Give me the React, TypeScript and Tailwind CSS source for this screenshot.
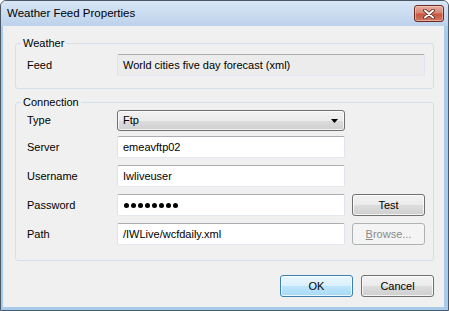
import type { ReactNode } from 'react'

const font = { fontFamily: '"Liberation Sans", Arial, sans-serif' }

const btnBase =
  'h-[22px] w-[73px] rounded-[3px] border text-[11px] flex items-center justify-center shadow-[inset_0_0_0_1px_rgba(255,255,255,0.75)]'
const btnNormal =
  'border-[#707070] text-black bg-[linear-gradient(#f2f2f2_0%,#ebebeb_50%,#dddddd_50%,#cfcfcf_100%)]'
const btnDefault =
  'border-[#3c7fb1] text-black bg-[linear-gradient(#eaf6fd_0%,#d9f0fc_50%,#bee6fd_50%,#a7d9f5_100%)]'
const btnDisabled = 'border-[#adb2b5] text-[#8a8a8a] bg-[#f4f4f4] shadow-none'

const textBox =
  'h-[22px] rounded-[2px] border border-[#e2e3ea] border-t-[#abadb3] border-b-[#e3e9ef] pl-[5px] flex items-center text-[11px] text-black'

function Row({ label, children, className = '' }: { label: string; children: ReactNode; className?: string }) {
  return (
    <div className={`flex items-center ${className}`}>
      <div className="w-[90px] text-[11px] text-black">{label}</div>
      {children}
    </div>
  )
}

function GroupBox({ title, children, className = '' }: { title: string; children: ReactNode; className?: string }) {
  return (
    <fieldset className={`border border-[#d5dfe5] rounded-[3px] pl-[11px] pr-[8px] ${className}`}>
      <legend className="-ml-[6px] px-[2px] text-[11px] leading-[14px] text-black">{title}</legend>
      {children}
    </fieldset>
  )
}

export default function App() {
  return (
    <div className="w-[449px] h-[311px] bg-white" style={font}>
      <div className="w-full h-full rounded-t-[6px] border border-[#4d5866] bg-[#a9cbea] flex flex-col overflow-hidden">
        {/* title bar */}
        <div className="h-[25px] shrink-0 flex items-start justify-between pl-[6px] pr-[4px] bg-[linear-gradient(#d8e6f5,#bcd2eb)]">
          <span className="text-[11.5px] leading-[25px] text-black">Weather Feed Properties</span>
          <button className="mt-[4px] w-[30px] h-[17px] rounded-[3px] border border-[#6b2b22] bg-[linear-gradient(#e6ada0_0%,#d98474_45%,#c65641_55%,#cf7764_100%)] flex items-center justify-center shadow-[inset_0_0_0_1px_rgba(255,220,210,0.5)]">
            <svg width="12" height="10" viewBox="0 0 12 10">
              <path d="M2 1.5 L10 8.5 M10 1.5 L2 8.5" stroke="#5a2018" strokeWidth="3.6" strokeLinecap="round" />
              <path d="M2 1.5 L10 8.5 M10 1.5 L2 8.5" stroke="#ffffff" strokeWidth="2" strokeLinecap="round" />
            </svg>
          </button>
        </div>

        {/* client area */}
        <div className="ml-[2px] mr-[4px] mb-[3px] flex-1 bg-[#f0f0f0] pl-[12px] pr-[10px] pt-[10px] flex flex-col">
          <GroupBox title="Weather" className="pt-[4px] pb-[12px]">
            <Row label="Feed">
              <div className={`${textBox} w-[308px] bg-[#ececec]`}>World cities five day forecast (xml)</div>
            </Row>
          </GroupBox>

          <GroupBox title="Connection" className="mt-[6px] pt-[1px] pb-[15px]">
            <Row label="Type">
              <div className="w-[228px] h-[21px] rounded-[3px] border border-[#707070] pl-[5px] pr-[6px] flex items-center justify-between text-[11px] text-black bg-[linear-gradient(#f2f2f2_0%,#ebebeb_50%,#dddddd_50%,#cfcfcf_100%)] shadow-[inset_0_0_0_1px_rgba(255,255,255,0.75)]">
                <span>Ftp</span>
                <svg width="7" height="4" viewBox="0 0 7 4">
                  <path d="M0 0 H7 L3.5 4 Z" fill="#000" />
                </svg>
              </div>
            </Row>
            <Row label="Server" className="mt-[5px]">
              <div className={`${textBox} w-[228px] bg-white`}>emeavftp02</div>
            </Row>
            <Row label="Username" className="mt-[7px]">
              <div className={`${textBox} w-[228px] bg-white`}>Iwliveuser</div>
            </Row>
            <Row label="Password" className="mt-[7px]">
              <div className={`${textBox} w-[228px] bg-white gap-[2px] pl-[6px]`}>
                {Array.from({ length: 8 }).map((_, i) => (
                  <span key={i} className="w-[5px] h-[5px] rounded-full bg-black" />
                ))}
              </div>
              <button className={`${btnBase} ${btnNormal} ml-[7px]`}>Test</button>
            </Row>
            <Row label="Path" className="mt-[7px]">
              <div className={`${textBox} w-[228px] bg-white`}>/IWLive/wcfdaily.xml</div>
              <button className={`${btnBase} ${btnDisabled} ml-[7px]`}>
                <span className="underline">B</span>rowse...
              </button>
            </Row>
          </GroupBox>

          <div className="mt-[14px] flex justify-end gap-[8px]">
            <button className={`${btnBase} ${btnDefault}`}>OK</button>
            <button className={`${btnBase} ${btnNormal}`}>Cancel</button>
          </div>
        </div>
      </div>
    </div>
  )
}
